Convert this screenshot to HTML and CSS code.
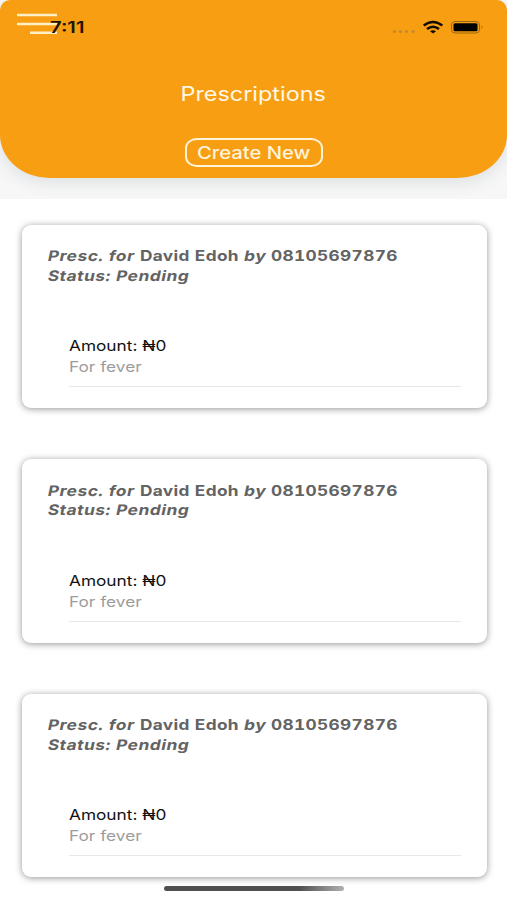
FILE: index.html
```html
<!DOCTYPE html>
<html lang="en">
  <head>
    <meta charset="utf-8">
    <title>Prescriptions</title>
    <link rel="stylesheet" href="styles.css">
  </head>
  <body>
    <div class="top">
      <header class="header">
        <div class="status-bar">
          <svg class="menu" width="42" height="24" viewBox="0 0 42 24">
            <path d="M0 3h40M0 12h40M13 20.8h27" stroke="#ffefc4" stroke-width="2.4" fill="none" />
          </svg>
          <span class="time">7:11</span>
          <svg class="signal" width="120" height="20" viewBox="0 0 120 20">
            <g fill="#c08a30">
              <circle cx="24.5" cy="13.5" r="1.6" />
              <circle cx="30.5" cy="13.5" r="1.6" />
              <circle cx="36.5" cy="13.5" r="1.6" />
              <circle cx="43" cy="13.5" r="1.6" />
            </g>
            <g fill="none" stroke="#130c00" stroke-width="2.5">
              <path d="M53.7 7.5q9.3-7 18.6 0" />
              <path d="M57 11q6-4.500 12 0" />
            </g>
            <path d="M60 13.3q3-2 6 0l-3 2.200z" fill="#130c00" />
            <rect x="81.5" y="3.5" width="28" height="11.5" rx="3.5" fill="none" stroke="#9c660f" />
            <rect x="83.5" y="5.2" width="24" height="8" rx="1.5" fill="#000" />
            <path d="M111.5 7.5q2 1.700 0 3.500z" fill="#9c660f" />
          </svg>
        </div>
        <h1><span class="wide">Prescriptions</span></h1>
        <button class="create" type="button"><span class="wide">Create New</span></button>
      </header>
    </div>

    <main class="list">
      <article class="card">
        <p class="info"><i>Presc. for</i> David Edoh <i>by</i> 08105697876<br><i>Status: Pending</i></p>
        <div class="item">
          <p class="amount">Amount: ₦0</p>
          <p class="note">For fever</p>
        </div>
      </article>
      <article class="card">
        <p class="info"><i>Presc. for</i> David Edoh <i>by</i> 08105697876<br><i>Status: Pending</i></p>
        <div class="item">
          <p class="amount">Amount: ₦0</p>
          <p class="note">For fever</p>
        </div>
      </article>
      <article class="card">
        <p class="info"><i>Presc. for</i> David Edoh <i>by</i> 08105697876<br><i>Status: Pending</i></p>
        <div class="item">
          <p class="amount">Amount: ₦0</p>
          <p class="note">For fever</p>
        </div>
      </article>
    </main>
    <div class="home-bar"></div>
  </body>
</html>
```
FILE: styles.css
```css
* {
  box-sizing: border-box;
}
body {
  margin: 0;
  height: 900px;
  overflow: hidden;
  background-color: #ffffff;
  font-family: Inter, "Liberation Sans", sans-serif;
}
h1,
p {
  margin: 0;
}
.top {
  height: 199px;
  overflow: hidden;
  background-color: #f7f7f7;
}
.header {
  display: flex;
  flex-direction: column;
  align-items: center;
  height: 178px;
  background-color: #f79e13;
  border-radius: 10px 10px 50px 50px / 10px 10px 43px 43px;
  box-shadow: 0 5px 16px rgba(60, 80, 100, 0.13);
}
.status-bar {
  display: flex;
  width: 100%;
  height: 80px;
  padding: 12px 16px 0 17px;
}
.time {
  margin: 5px 0 0 -9px;
  font-size: 16px;
  line-height: 21px;
  font-weight: 600;
  color: #221400;
  transform: scaleX(1.26);
  transform-origin: left;
}
.signal {
  margin: 6px 1px 0 auto;
}
.wide {
  display: inline-block;
  transform: scaleX(1.17);
}
h1 {
  font-size: 20px;
  line-height: 29px;
  font-weight: 400;
  color: #fff8e6;
}
.create {
  width: 138px;
  height: 29px;
  margin-top: 29px;
  padding: 0;
  border: 2px solid #fff3d9;
  border-radius: 12px / 10px;
  background: none;
  font-family: inherit;
  font-size: 17px;
  line-height: 24px;
  font-weight: 500;
  color: #fff3d9;
}
.create .wide {
  transform: scaleX(1.19);
}
.list {
  display: flex;
  flex-direction: column;
  gap: 51px;
  padding: 25.5px 20.5px 0 21.5px;
}
.card {
  flex: none;
  height: 183.5px;
  padding: 21.5px 26px;
  background-color: #ffffff;
  border-radius: 9px;
  box-shadow: 0 1px 7px rgba(0, 0, 0, 0.42);
}
.info,
.amount,
.note {
  width: max-content;
  transform: scaleX(1.19);
  transform-origin: left;
}
.info {
  font-size: 14.5px;
  line-height: 19.5px;
  font-weight: 700;
  letter-spacing: 0.3px;
  font-variant-numeric: tabular-nums;
  color: #636363;
}
/* slanted upright letters instead of the true italic */
.info i {
  display: inline-block;
  font-style: normal;
  letter-spacing: 0.48px;
  transform: skewX(-10deg);
}
.item {
  margin: 50px 0 0 21px;
  padding-bottom: 9px;
  border-bottom: 1px solid #e8e8e8;
}
.amount {
  font-size: 14.5px;
  line-height: 21px;
  color: #111111;
}
.note {
  font-size: 14.5px;
  line-height: 21px;
  color: #9c9c9c;
}
.home-bar {
  position: absolute;
  left: 164px;
  top: 886px;
  width: 180px;
  height: 5px;
  border-radius: 3px;
  background: linear-gradient(to right, #505050 75%, #b0b0b0);
}
```
